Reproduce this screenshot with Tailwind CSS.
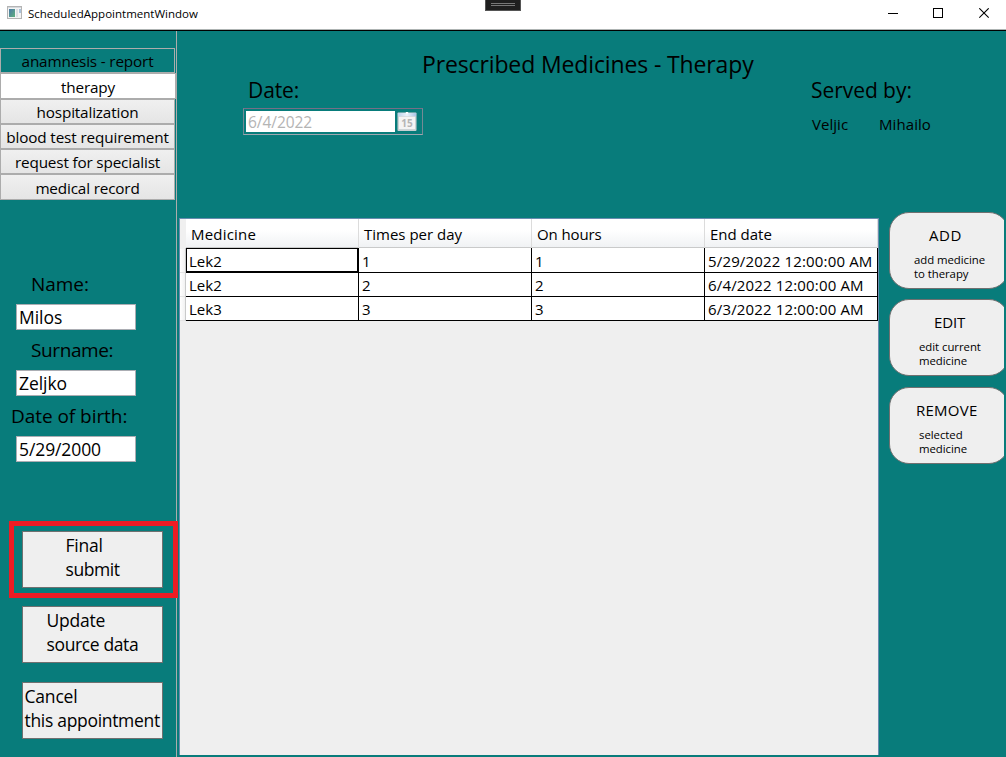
<!DOCTYPE html>
<html lang="en">
<head>
<meta charset="utf-8">
<title>ScheduledAppointmentWindow</title>
<script src="https://cdn.jsdelivr.net/npm/@tailwindcss/browser@4"></script>
</head>
<body class="flex h-[757px] w-[1006px] flex-col overflow-hidden bg-[#087c7b] font-['Open_Sans','Noto_Sans',sans-serif] text-black whitespace-nowrap">

<!-- Title bar -->
<header class="relative flex h-[31px] shrink-0 items-start border-b border-black bg-white">
  <svg class="mt-[6px] ml-[7px] h-[14px] w-[15px]" viewBox="0 0 15 14" shape-rendering="crispEdges">
    <defs><linearGradient id="app" x1="0" y1="0" x2="1" y2="1"><stop offset="0" stop-color="#4a78a8"/><stop offset="1" stop-color="#5fb07c"/></linearGradient></defs>
    <rect x=".5" y=".5" width="14" height="12" fill="#f4f4f4" stroke="#b4b4b4"/>
    <rect x="1" y="1" width="13" height="1" fill="#d4d8dc"/>
    <rect x="2" y="3" width="6" height="8" fill="url(#app)"/>
    <rect x="9" y="3" width="2" height="8" fill="#dcdfe4"/>
    <rect x="12" y="3" width="2" height="4" fill="#a9c2da"/>
  </svg>
  <span class="mt-[6px] ml-[6px] text-[11.5px] leading-[16px]">ScheduledAppointmentWindow</span>
  <div class="mt-[8px] mr-[16px] ml-auto flex">
    <svg class="mr-[34px] size-[11px]" viewBox="0 0 11 11" shape-rendering="crispEdges"><path d="M0 5.5h10" stroke="#000" fill="none"/></svg>
    <svg class="mr-[35px] size-[11px]" viewBox="0 0 11 11" shape-rendering="crispEdges"><path d="M.5.5h9v9h-9z" stroke="#000" fill="none"/></svg>
    <svg class="size-[11px]" viewBox="0 0 11 11"><path d="M.3.3l9.4 9.4M9.7.3L.3 9.7" stroke="#000" stroke-width="1.1" fill="none"/></svg>
  </div>
  <div class="absolute inset-x-0 bottom-0 h-px bg-[#aeb4b3]"></div>
  <!-- Docked debug toolbar handle -->
  <div class="absolute top-0 left-[485px] flex h-[11px] w-[36px] flex-col gap-px border border-t-0 border-[#555] bg-[#1f1f1f] px-[5px] pt-[3px]">
    <div class="h-px bg-[#777]"></div>
    <div class="h-px bg-[#777]"></div>
  </div>
</header>

<div class="flex min-h-0 flex-1">
  <!-- Sidebar -->
  <aside class="relative flex w-[177px] shrink-0 flex-col border-r border-[#acacac]">
    <nav class="mt-[17px] flex flex-col text-center text-[15.3px] leading-[24px] tracking-[-0.17px] *:border *:border-[#acacac]">
      <div class="h-[25px] w-[175px] border-r-0">anamnesis - report</div>
      <div class="h-[26px] w-[176px] border-r-0 bg-white pt-px">therapy</div>
      <div class="h-[25px] w-[175px] border-r-0 bg-linear-to-b from-[#f0f0f0] to-[#e5e5e5]">hospitalization</div>
      <div class="h-[25px] w-[175px] border-r-0 bg-linear-to-b from-[#f0f0f0] to-[#e5e5e5] tracking-[-0.14px]">blood test requirement</div>
      <div class="h-[25px] w-[175px] border-r-0 bg-linear-to-b from-[#f0f0f0] to-[#e5e5e5]">request for specialist</div>
      <div class="h-[26px] w-[175px] border-r-0 bg-linear-to-b from-[#f0f0f0] to-[#e5e5e5] pt-px">medical record</div>
    </nav>

    <div class="mt-[71px] flex flex-col gap-[7px] text-[19px] leading-[26px] tracking-[-0.05px]">
      <div class="pl-[31px]">Name:</div>
      <div class="ml-[16px] h-[26px] w-[120px] border border-[#abadb3] bg-white pl-[2px] text-[17.5px] leading-[24px]">Milos</div>
      <div class="pl-[31px] tracking-[-0.4px]">Surname:</div>
      <div class="ml-[16px] h-[26px] w-[120px] border border-[#abadb3] bg-white pl-[2px] text-[17.5px] leading-[24px]">Zeljko</div>
      <div class="pl-[11px]">Date of birth:</div>
      <div class="ml-[16px] h-[26px] w-[120px] border border-[#abadb3] bg-white pl-[2px] text-[17.5px] leading-[24px] tracking-[-0.1px]">5/29/2000</div>
    </div>

    <div class="mt-[69px] ml-[22px] flex w-[141px] flex-col text-[17.5px] leading-[24px] *:h-[57px] *:border *:border-[#707070] *:bg-[#efefef] *:pt-px">
      <div class="pl-[42.5px]"><div class="tracking-[-0.23px]">Final</div><div class="tracking-[-0.45px]">submit</div></div>
      <div class="mt-[18px] pl-[23.5px]"><div class="tracking-[-0.23px]">Update</div><div class="tracking-[-0.37px]">source data</div></div>
      <div class="mt-[19px] pl-[1.5px]"><div class="tracking-[-0.2px]">Cancel</div><div class="tracking-[-0.31px]">this appointment</div></div>
    </div>
    <!-- Highlight around the submit button -->
    <div class="absolute top-[490px] left-[9px] h-[77px] w-[169px] border-5 border-[#ed1c24]"></div>
  </aside>

  <main class="flex min-w-0 flex-1 flex-col">
    <section class="flex h-[181px] shrink-0 flex-col">
      <h1 class="mt-[21px] ml-[245px] text-[23px] leading-[24px] tracking-[-0.13px]">Prescribed Medicines - Therapy</h1>
      <div class="flex">
        <div class="ml-[66px] w-[180px]">
          <div class="pl-[5px] text-[21px] leading-[28px] tracking-[-0.1px]">Date:</div>
          <div class="mt-[4px] flex h-[27px] border border-[#748a95] border-t-[#766f86] border-b-[#9fa7b0] p-[2px]">
            <div class="h-[21px] w-[149px] bg-white pl-[2px] text-[15.5px] leading-[23px] tracking-[-0.05px] text-[#b4b4b4]">6/4/2022</div>
            <svg class="mt-[0.5px] ml-[2px] size-[20px]" viewBox="0 0 21 21">
              <defs><linearGradient id="cal" x1="0" x2="1"><stop offset="0" stop-color="#bdd2ea"/><stop offset=".5" stop-color="#e8f1fa"/><stop offset="1" stop-color="#a9c6e6"/></linearGradient></defs>
              <rect x=".5" y=".5" width="20" height="19.5" rx="1" fill="#c9d0d2"/>
              <rect x="1" y="1" width="19" height="3.5" fill="url(#cal)"/>
              <path d="M9 0h3L10.500 3z" fill="#fff"/>
              <rect x="2" y="5" width="17" height="13" fill="#f4f4f4"/>
              <text x="10.500" y="15.300" text-anchor="middle" font-size="10.500" font-weight="700" font-family="Open Sans" fill="#b5b5b5">15</text>
            </svg>
          </div>
        </div>
        <div class="ml-[388px]">
          <div class="text-[21px] leading-[28px] tracking-[-0.05px]">Served by:</div>
          <div class="mt-[10px] flex text-[15px] leading-[20px] tracking-[0.03px]">
            <span class="w-[68px] pl-[1px]">Veljic</span><span class="tracking-[0.08px]">Mihailo</span>
          </div>
        </div>
      </div>
    </section>

    <section class="flex min-h-0 flex-1">
      <!-- Medicines grid -->
      <div class="mt-[6px] mb-[2px] ml-[2px] w-[700px] border border-b-0 border-[#688caf] bg-[#efefef] text-[15px]">
        <div class="flex h-[29px] leading-[30px]">
          <div class="w-[6px] bg-[#f0f0f0]"></div>
          <div class="grid w-[692px] grid-cols-4 border-b border-[#c9caca] bg-linear-to-b from-white from-40% to-[#f0f2f4] *:border-r *:border-[#dcdcdc] *:pl-[5px]">
            <div class="tracking-[0.2px]">Medicine</div><div>Times per day</div><div class="tracking-[-0.1px]">On hours</div><div>End date</div>
          </div>
        </div>
        <div class="flex">
          <div class="flex w-[6px] flex-col border-r border-[#c9caca] pt-px *:h-[24px] *:border-b *:border-[#e4e4e4] *:bg-linear-to-r *:from-white *:to-[#f1f1f1]"><div></div><div></div><div></div></div>
          <div class="grid w-[692px] grid-cols-4 grid-rows-[25px_24px_24px] leading-[24px] *:border-r *:border-b *:border-black *:bg-white *:pl-[3px]">
            <div class="relative pt-px">Lek2<div class="absolute top-0 left-0 h-[25px] w-[173px] border border-r-2 border-b-2 border-black"></div></div><div class="pt-px">1</div><div class="pt-px">1</div><div class="pt-px tracking-[0.16px]">5/29/2022 12:00:00 AM</div>
            <div>Lek2</div><div>2</div><div>2</div><div class="tracking-[0.16px]">6/4/2022 12:00:00 AM</div>
            <div>Lek3</div><div>3</div><div>3</div><div class="tracking-[0.16px]">6/3/2022 12:00:00 AM</div>
          </div>
        </div>
      </div>

      <!-- Actions, cut off by the panel's right edge -->
      <div class="ml-[10px] w-[115px] overflow-hidden text-[11.4px] leading-[14px] tracking-[-0.05px] *:h-[77px] *:w-[120px] *:rounded-[20px] *:border *:border-[#707070] *:bg-[#efefef] *:pt-[12px]">
        <div><div class="pl-[39px] text-[15px] leading-[20px] tracking-[0.6px]">ADD</div><div class="mt-[8px] pl-[24px]">add medicine<br>to therapy</div></div>
        <div class="mt-[10px]"><div class="pl-[44px] text-[15px] leading-[20px] tracking-[-0.1px]">EDIT</div><div class="mt-[8px] pl-[29px]">edit current<br>medicine</div></div>
        <div class="mt-[11px]"><div class="pl-[26px] text-[15px] leading-[20px] tracking-[0.25px]">REMOVE</div><div class="mt-[8px] pl-[29px]">selected<br>medicine</div></div>
      </div>
    </section>
  </main>
</div>
</body>
</html>
